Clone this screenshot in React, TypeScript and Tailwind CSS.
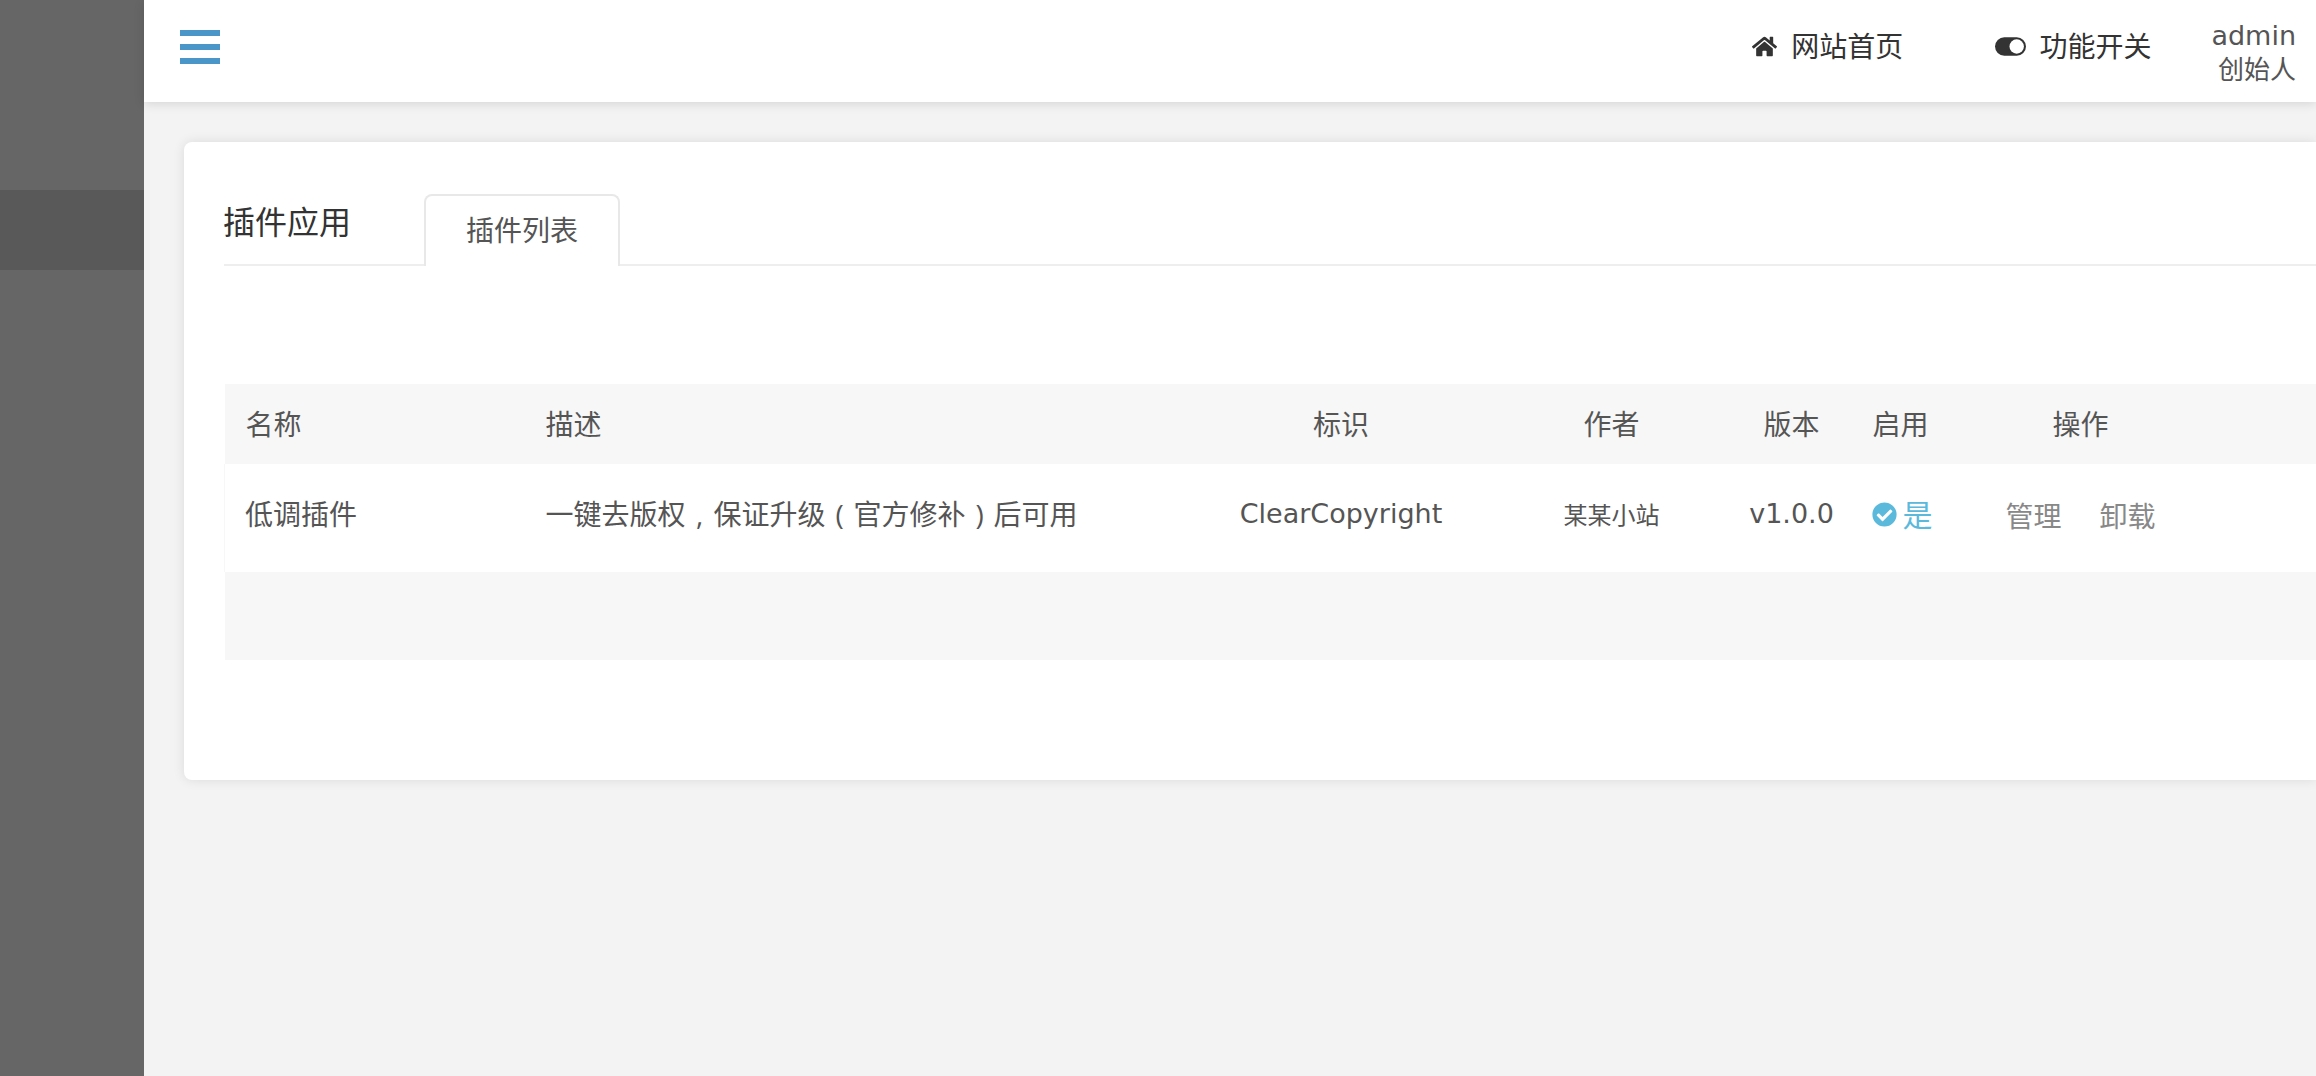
import { FaCheckCircle, FaHome } from "react-icons/fa";

const font = "font-['Open_Sans','Noto_Sans_CJK_SC',sans-serif]";
const latin = "font-['DejaVu_Sans',sans-serif] text-[27px]";

function Punct({ children }: { children: string }) {
  return <span className="inline-block w-7 text-center">{children}</span>;
}

function ToggleIcon() {
  return (
    <svg viewBox="0 0 30 18" className="h-[19px] w-[31px]" fill="none">
      <rect width="30" height="18" rx="9" fill="#333333" />
      <circle cx="21" cy="9" r="7" fill="#ffffff" />
    </svg>
  );
}

export default function App() {
  return (
    <div className={`flex h-screen overflow-hidden bg-[#f3f3f3] ${font}`}>
      <aside className="w-[144px] shrink-0 bg-[#666666] pt-[190px]">
        <div className="h-[80px] bg-[#595959]" />
      </aside>

      <div className="flex min-w-0 flex-1 flex-col">
        <header className="relative flex h-[102px] shrink-0 items-center justify-between bg-white pl-9 pr-5 shadow-[0_2px_10px_rgba(0,0,0,0.12)]">
          <div className="mb-[8px] flex w-10 flex-col gap-2">
            <div className="h-1.5 bg-[#4b96c8]" />
            <div className="h-1.5 bg-[#4b96c8]" />
            <div className="h-1.5 bg-[#4b96c8]" />
          </div>
          <div className="flex items-center text-[28px] text-[#333]">
            <a className="mb-[10px] flex items-center gap-[14px]">
              <FaHome className="h-[25px] w-[25px]" />
              网站首页
            </a>
            <a className="mb-[10px] ml-[92px] flex items-center gap-[13px]">
              <ToggleIcon />
              功能开关
            </a>
            <div className="ml-[60px] flex flex-col items-end text-[#555]">
              <span className={`${latin} leading-[34px]`}>admin</span>
              <span className="pt-[1px] text-[26px] leading-[30px]">创始人</span>
            </div>
          </div>
        </header>

        <main className="flex-1 pl-10 pt-10">
          <section className="h-[638px] rounded-l-lg bg-white pl-10 pt-[52px] shadow-[0_0_12px_rgba(0,0,0,0.1)]">
            <div className="flex h-[72px] border-b-2 border-[#eeeeee]">
              <h2 className="-ml-[1px] w-[201px] pt-[4px] text-[32px] leading-[48px] text-[#333]">插件应用</h2>
              <div className="-mb-[2px] flex h-[72px] w-[196px] justify-center rounded-t-lg border-2 border-b-0 border-[#e8e8e8] bg-white pt-[10px] text-[28px] leading-[48px] text-[#555]">
                插件列表
              </div>
            </div>

            <table className="mt-[118px] w-full table-fixed border-collapse text-[28px] text-[#555]">
              <colgroup>
                <col className="w-[300px]" />
                <col className="w-[667px]" />
                <col className="w-[299px]" />
                <col className="w-[242px]" />
                <col className="w-[118px]" />
                <col className="w-[128px]" />
                <col className="w-[204px]" />
                <col />
              </colgroup>
              <thead>
                <tr className="h-[80px] bg-[#f7f7f7] font-normal">
                  <th className="pl-[21px] text-left font-normal">名称</th>
                  <th className="pl-[21px] text-left font-normal">描述</th>
                  <th className="font-normal">标识</th>
                  <th className="font-normal">作者</th>
                  <th className="font-normal">版本</th>
                  <th className="pl-[22px] text-left font-normal">启用</th>
                  <th className="font-normal">操作</th>
                  <th />
                </tr>
              </thead>
              <tbody>
                <tr className="h-[108px] border-l border-[#f7f7f7]">
                  <td className="pb-[8px] pl-[20px]">低调插件</td>
                  <td className="pb-[8px] pl-[21px]">
                    一键去版权<Punct>,</Punct>保证升级<Punct>(</Punct>官方修补<Punct>)</Punct>后可用
                  </td>
                  <td className={`pb-[8px] text-center ${latin}`}>ClearCopyright</td>
                  <td className="pb-[6px] text-center text-[24px]">某某小站</td>
                  <td className={`pb-[8px] text-center ${latin}`}>v1.0.0</td>
                  <td className="pb-[8px] pl-[21px]">
                    <span className="flex items-center gap-[6px] text-[30px] text-[#5bb9dc]">
                      <FaCheckCircle className="h-[25px] w-[25px]" />是
                    </span>
                  </td>
                  <td className="pb-[4px]">
                    <div className="flex justify-center gap-[38px] text-[#888]">
                      <a>管理</a>
                      <a>卸载</a>
                    </div>
                  </td>
                  <td />
                </tr>
                <tr className="h-[88px] bg-[#f7f7f7]">
                  <td colSpan={8} />
                </tr>
              </tbody>
            </table>
          </section>
        </main>
      </div>
    </div>
  );
}
